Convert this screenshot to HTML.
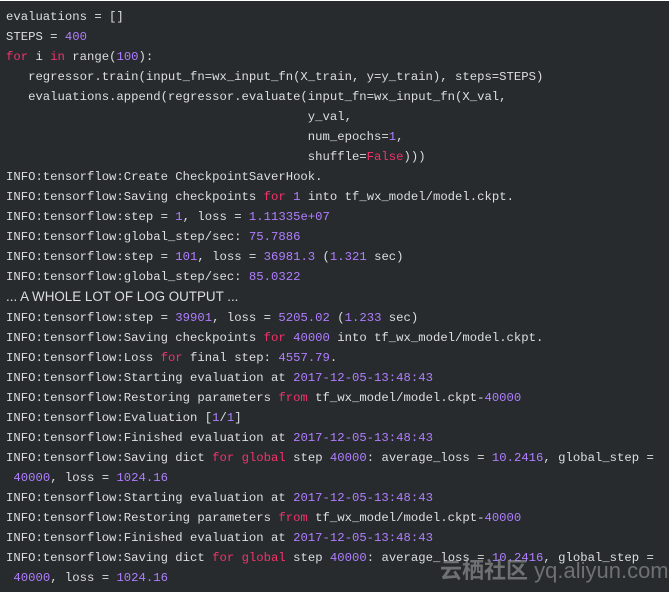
<!DOCTYPE html>
<html><head><meta charset="utf-8"><style>
html,body{margin:0;padding:0;background:#fff;}
.box{position:absolute;left:0;top:1px;width:669px;height:591px;background:#272b2e;}
pre{margin:0;position:absolute;left:6px;top:6px;font-family:"Liberation Mono",monospace;font-size:12.27px;line-height:20px;color:#dcdedf;white-space:pre;}
.k{color:#f2336a}.n{color:#b07eff}
.p{font-family:"Liberation Sans",sans-serif;font-size:13.4px}
.wm{position:absolute;left:440px;top:552px;font-family:"Liberation Sans","Noto Sans CJK SC",sans-serif;font-size:22px;color:rgba(170,170,170,0.55);font-weight:bold;white-space:nowrap}
.wm span{font-weight:normal}
</style></head><body><div class="box"><pre>evaluations = []
STEPS = <span class="n">400</span>
<span class="k">for</span> i <span class="k">in</span> range(<span class="n">100</span>):
   regressor.train(input_fn=wx_input_fn(X_train, y=y_train), steps=STEPS)
   evaluations.append(regressor.evaluate(input_fn=wx_input_fn(X_val,
                                         y_val,
                                         num_epochs=<span class="n">1</span>,
                                         shuffle=<span class="k">False</span>)))
INFO:tensorflow:Create CheckpointSaverHook.
INFO:tensorflow:Saving checkpoints <span class="k">for</span> <span class="n">1</span> into tf_wx_model/model.ckpt.
INFO:tensorflow:step = <span class="n">1</span>, loss = <span class="n">1.11335e+07</span>
INFO:tensorflow:global_step/sec: <span class="n">75.7886</span>
INFO:tensorflow:step = <span class="n">101</span>, loss = <span class="n">36981.3</span> (<span class="n">1.321</span> sec)
INFO:tensorflow:global_step/sec: <span class="n">85.0322</span>
<span class="p">... A WHOLE LOT OF LOG OUTPUT ...</span>
INFO:tensorflow:step = <span class="n">39901</span>, loss = <span class="n">5205.02</span> (<span class="n">1.233</span> sec)
INFO:tensorflow:Saving checkpoints <span class="k">for</span> <span class="n">40000</span> into tf_wx_model/model.ckpt.
INFO:tensorflow:Loss <span class="k">for</span> final step: <span class="n">4557.79</span>.
INFO:tensorflow:Starting evaluation at <span class="n">2017-12-05-13:48:43</span>
INFO:tensorflow:Restoring parameters <span class="k">from</span> tf_wx_model/model.ckpt-<span class="n">40000</span>
INFO:tensorflow:Evaluation [<span class="n">1</span>/<span class="n">1</span>]
INFO:tensorflow:Finished evaluation at <span class="n">2017-12-05-13:48:43</span>
INFO:tensorflow:Saving dict <span class="k">for</span> <span class="k">global</span> step <span class="n">40000</span>: average_loss = <span class="n">10.2416</span>, global_step =
 <span class="n">40000</span>, loss = <span class="n">1024.16</span>
INFO:tensorflow:Starting evaluation at <span class="n">2017-12-05-13:48:43</span>
INFO:tensorflow:Restoring parameters <span class="k">from</span> tf_wx_model/model.ckpt-<span class="n">40000</span>
INFO:tensorflow:Finished evaluation at <span class="n">2017-12-05-13:48:43</span>
INFO:tensorflow:Saving dict <span class="k">for</span> <span class="k">global</span> step <span class="n">40000</span>: average_loss = <span class="n">10.2416</span>, global_step =
 <span class="n">40000</span>, loss = <span class="n">1024.16</span></pre>
<div class="wm">云栖社区 <span>yq.aliyun.com</span></div></div></body></html>
